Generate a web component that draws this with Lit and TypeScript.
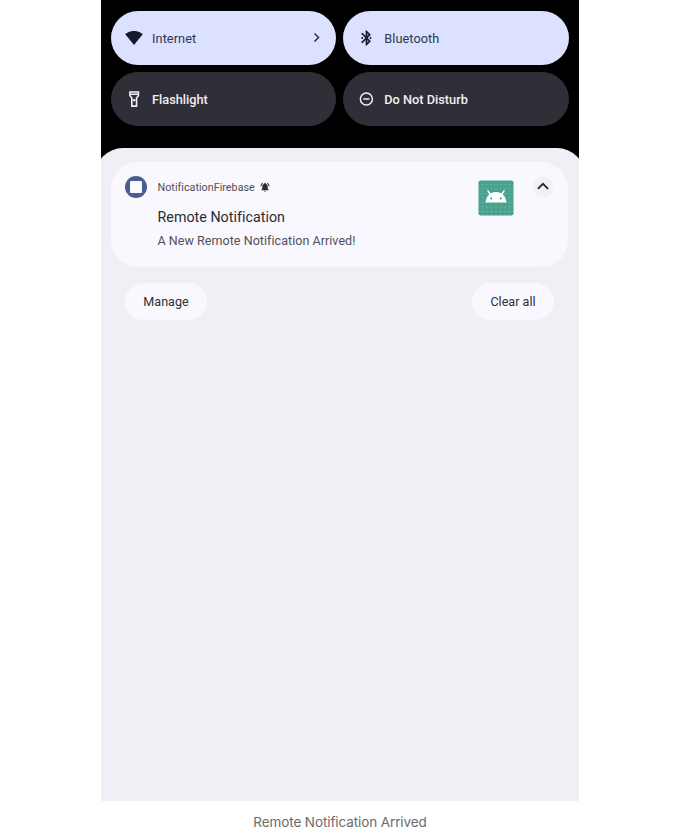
import { LitElement, html, css, svg } from "lit";
import { customElement, property } from "lit/decorators.js";

const wifi = svg`<path d="M12 21.2 0.4 6.9C1 6.4 5.2 2.8 12 2.8s11 3.600 11.600 4.100z"/>`;
const bluetooth = svg`<path d="M18.410 7.710 12.700 2h-1v7.590L7.110 5 5.700 6.410 11.290 12 5.700 17.590 7.110 19 11.700 14.410V22h1l5.710-5.710L14.110 12zM13.700 5.830l1.880 1.880L13.700 9.590zm1.880 10.460L13.700 18.170v-3.760z" stroke="currentColor" stroke-width=".3"/><circle cx="7" cy="12" r="1.300"/><circle cx="18" cy="12" r="1.300"/>`;
const flashlight = svg`<path d="M5.500 1.500v6l2.500 3.500v11.500h8.500V11L19 7.500v-6zm11.300 2v1.300H7.700V3.500zm-2.500 6.900V20.300h-4.100v-9.900L7.700 7.400v-.6h9.100v.6z"/><circle cx="12.250" cy="13.500" r="1.600"/>`;
const dnd = svg`<path d="M8.500 11h8v2h-8zM12.500 3a9 9 0 1 0 0 18 9 9 0 0 0 0-18m0 16a7 7 0 1 1 0-14 7 7 0 0 1 0 14"/>`;

@customElement("quick-tile")
class QuickTile extends LitElement {
  @property() label = "";
  @property({ attribute: false }) icon: unknown;
  @property({ type: Boolean, reflect: true }) active = false;
  @property({ type: Boolean }) more = false;

  static styles = css`
    :host {
      display: flex;
      align-items: center;
      box-sizing: border-box;
      height: 54.5px;
      padding: 0 13px 0 14.5px;
      border-radius: 27.25px;
      background: #302e36;
      color: #f0eff5;
      font-weight: 500;
    }
    :host([active]) {
      background: #dbe1ff;
      color: #111b2c;
      font-weight: 400;
    }
    .icon {
      width: 18px;
      height: 18px;
      fill: currentColor;
    }
    .label {
      margin-left: 9px;
      padding-top: 1px;
      flex: 1;
      font-size: 12.75px;
      letter-spacing: 0;
    }
    :host([active]) .label {
      color: #30374f;
      letter-spacing: 0.06px;
    }
    .more {
      width: 13px;
      height: 13px;
      fill: none;
      stroke: #2c3347;
      stroke-width: 1.5;
    }
  `;

  render() {
    return html`
      <svg class="icon" viewBox="0 0 24 24">${this.icon}</svg>
      <span class="label">${this.label}</span>
      ${this.more ? html`<svg class="more" viewBox="0 0 13 13"><path d="M4.500 2.500 8.500 6.500 4.500 10.500" /></svg>` : ""}
    `;
  }
}

@customElement("app-root")
class AppRoot extends LitElement {
  static styles = css`
    :host {
      display: block;
      height: 831px;
      overflow: hidden;
      background: #fff;
      font-family: Roboto, "Liberation Sans", sans-serif;
    }
    .phone {
      display: flex;
      flex-direction: column;
      box-sizing: border-box;
      width: 478px;
      height: 801px;
      margin: 0 auto;
      padding-top: 10.5px;
      background: #000;
      overflow: hidden;
    }
    .tiles {
      display: grid;
      grid-template-columns: 1fr 1fr;
      gap: 6.5px;
      margin: 0 10.5px 21.500px 9.500px;
    }
    .shade {
      flex: 1;
      margin: 0 -6px;
      padding: 14.500px 17px 0 15.500px;
      border-radius: 28px 28px 0 0;
      background: #f0eff5;
    }
    .card {
      display: flex;
      align-items: flex-start;
      box-sizing: border-box;
      height: 105px;
      padding: 14px 14.500px 0 14.500px;
      border-radius: 27px;
      background: #f9f8fe;
    }
    .app-icon {
      width: 22px;
      height: 22px;
    }
    .body {
      flex: 1;
      margin-left: 10.500px;
      white-space: nowrap;
    }
    .source {
      display: flex;
      align-items: center;
      height: 22px;
      font-size: 10.750px;
      letter-spacing: 0.02px;
      color: #50505a;
    }
    .bell {
      width: 10px;
      height: 10px;
      margin-left: 5.500px;
      fill: #2d2d35;
    }
    .title {
      margin-top: 9px;
      line-height: 20px;
      font-size: 14.250px;
      letter-spacing: 0.03px;
      color: #2b2b32;
    }
    .text {
      margin-top: 5px;
      line-height: 18px;
      font-size: 12.500px;
      letter-spacing: 0.05px;
      color: #505058;
    }
    .picture {
      width: 36px;
      height: 36px;
      margin: 4px 18px 0 0;
    }
    .collapse {
      width: 22px;
      height: 22px;
    }
    .actions {
      display: flex;
      justify-content: space-between;
      margin: 16px 14px 0 14.500px;
    }
    .pill {
      width: 82px;
      height: 37px;
      padding: 0;
      border: 0;
      border-radius: 18.500px;
      background: #f9f8fe;
      color: #303038;
      font: 400 12.600px Roboto, "Liberation Sans", sans-serif;
    }
    .caption {
      height: 30px;
      padding-top: 12px;
      box-sizing: border-box;
      line-height: 18px;
      text-align: center;
      font-family: Inter, "Liberation Sans", sans-serif;
      font-size: 13.500px;
      letter-spacing: -0.1px;
      color: #6b6b6b;
    }
  `;

  render() {
    return html`
      <div class="phone">
        <div class="tiles">
          <quick-tile active more label="Internet" .icon=${wifi}></quick-tile>
          <quick-tile active label="Bluetooth" .icon=${bluetooth}></quick-tile>
          <quick-tile label="Flashlight" .icon=${flashlight}></quick-tile>
          <quick-tile label="Do Not Disturb" .icon=${dnd}></quick-tile>
        </div>
        <div class="shade">
          <div class="card">
            <svg class="app-icon" viewBox="0 0 22 22">
              <circle cx="11" cy="11" r="11" fill="#4c5d92" />
              <rect x="5" y="5" width="12" height="12" rx="1" fill="#fafaff" />
            </svg>
            <div class="body">
              <div class="source">
                <span>NotificationFirebase</span>
                <svg class="bell" viewBox="1 1 22 22">
                  <path d="M7.580 4.080 6.150 2.650C3.750 4.480 2.170 7.300 2.030 10.500h2a8.440 8.440 0 0 1 3.550-6.420m12.390 6.420h2c-.15-3.200-1.730-6.020-4.120-7.850l-1.420 1.430a8.500 8.500 0 0 1 3.540 6.420M18 11c0-3.070-1.640-5.640-4.500-6.320V4a1.500 1.500 0 0 0-3 0v.68C7.630 5.360 6 7.920 6 11v5l-2 2v1h16v-1l-2-2zm-6 11c1.100 0 2-.9 2-2h-4a2 2 0 0 0 2 2" />
                </svg>
              </div>
              <div class="title">Remote Notification</div>
              <div class="text">A New Remote Notification Arrived!</div>
            </div>
            <svg class="picture" viewBox="0 0 36 36">
              <rect x=".5" y=".5" width="35" height="35" rx="2" fill="#46a08c" />
              <path d="M4.500 1v34M9 1v34M13.500 1v34M18 1v34M22.500 1v34M27 1v34M31.500 1v34M1 4.500h34M1 9h34M1 13.500h34M1 18h34M1 22.500h34M1 27h34M1 31.500h34" stroke="#8fd0c0" stroke-opacity=".35" stroke-width=".6" />
              <path d="M10 10.800 12.600 15M26 10.800 23.400 15" stroke="#fff" stroke-width="1.500" stroke-linecap="round" />
              <path d="M7.600 22.600C7.900 16.500 12 12 18 12s10.100 4.500 10.400 10.600z" fill="#fff" />
              <circle cx="13.300" cy="18.500" r="1.100" fill="#46a08c" />
              <circle cx="22.700" cy="18.500" r="1.100" fill="#46a08c" />
            </svg>
            <svg class="collapse" viewBox="0 0 22 22">
              <circle cx="11" cy="11" r="10.500" fill="#f2f1f6" />
              <path d="M5.900 12.900 11 7.800l5.100 5.100" fill="none" stroke="#222229" stroke-width="1.700" />
            </svg>
          </div>
          <div class="actions">
            <button class="pill">Manage</button>
            <button class="pill">Clear all</button>
          </div>
        </div>
      </div>
      <div class="caption">Remote Notification Arrived</div>
    `;
  }
}
